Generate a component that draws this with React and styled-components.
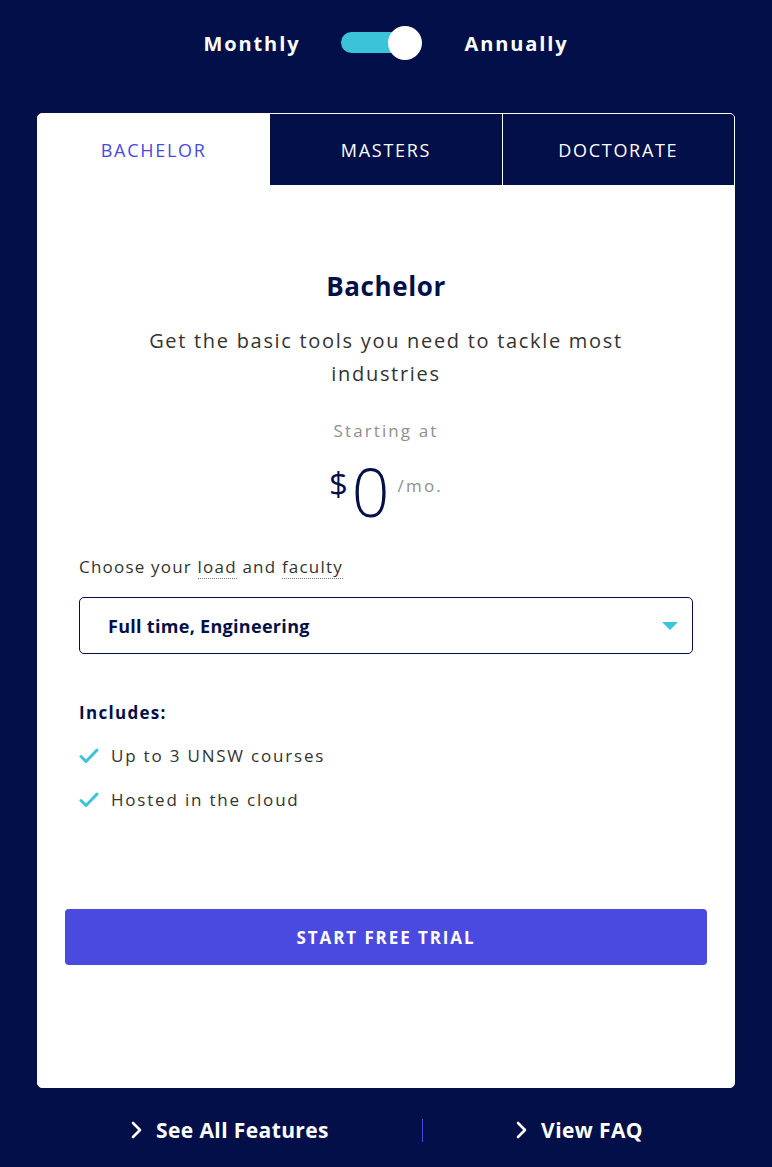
import React, { useState } from "react";
import styled, { createGlobalStyle } from "styled-components";

const navy = "#020f48";
const cyan = "#3bc3da";
const purple = "#4a4ae0";

const GlobalStyle = createGlobalStyle`
  body {
    margin: 0;
    background: ${navy};
    font-family: "Open Sans", "Noto Sans", sans-serif;
  }
`;

const Page = styled.div`
  width: 772px;
  padding-top: 24px;
  display: flex;
  flex-direction: column;
  align-items: center;
`;

const ToggleRow = styled.div`
  display: flex;
  align-items: center;
  gap: 40px;
  height: 38px;
`;

const ToggleLabel = styled.span`
  color: #fff;
  font-size: 20px;
  font-weight: 700;
  letter-spacing: 1.9px;
`;

const Switch = styled.button`
  position: relative;
  width: 84px;
  height: 38px;
  border: none;
  background: none;
  padding: 0;
  cursor: pointer;
  &::before {
    content: "";
    position: absolute;
    left: 1px;
    top: 8px;
    width: 64px;
    height: 21px;
    border-radius: 11px;
    background: ${cyan};
  }
  &::after {
    content: "";
    position: absolute;
    top: 2px;
    left: ${(p) => (p.$on ? "48px" : "0px")};
    width: 34px;
    height: 34px;
    border-radius: 50%;
    background: #fff;
  }
`;

const Card = styled.div`
  margin-top: 51px;
  width: 698px;
  background: #fff;
  border-radius: 5px;
  overflow: hidden;
  border: 1px solid #fff;
  box-sizing: border-box;
  display: flex;
  flex-direction: column;
`;

const Tabs = styled.div`
  display: grid;
  grid-template-columns: 1fr 1fr 1fr;
  gap: 1px;
  background: #fff;
`;

const Tab = styled.button`
  height: 71px;
  border: none;
  background: ${(p) => (p.$active ? "#fff" : navy)};
  color: ${(p) => (p.$active ? purple : "#fff")};
  font-family: inherit;
  font-size: 18px;
  font-weight: 500;
  letter-spacing: 1.7px;
  cursor: pointer;
`;

const Body = styled.div`
  padding: 83px 41px 0;
  display: flex;
  flex-direction: column;
`;

const Title = styled.h2`
  margin: 0;
  text-align: center;
  color: ${navy};
  font-size: 26px;
  font-weight: 700;
  line-height: 36px;
  letter-spacing: 0.6px;
`;

const Desc = styled.p`
  margin: 20px auto 0;
  max-width: 500px;
  text-align: center;
  color: #333;
  font-size: 20px;
  line-height: 33px;
  letter-spacing: 1.7px;
`;

const Starting = styled.div`
  margin-top: 29px;
  text-align: center;
  color: #8f8f8f;
  font-size: 17px;
  letter-spacing: 2.1px;
`;

const Price = styled.div`
  margin-top: 15px;
  display: flex;
  justify-content: center;
  align-items: flex-start;
  color: ${navy};
`;

const Currency = styled.span`
  font-size: 33px;
  line-height: 1;
  margin-top: 10px;
  margin-right: 4px;
`;

const Amount = styled.span`
  font-size: 66px;
  font-weight: 300;
  line-height: 68px;
`;

const Per = styled.span`
  margin-top: 17px;
  margin-left: 8px;
  color: #8f8f8f;
  font-size: 17px;
  letter-spacing: 2.2px;
`;

const FieldLabel = styled.div`
  margin-top: 30px;
  color: #333;
  font-size: 17px;
  letter-spacing: 1.2px;
`;

const Dotted = styled.span`
  border-bottom: 1px dotted #777;
`;

const Select = styled.div`
  margin-top: 19px;
  height: 57px;
  box-sizing: border-box;
  border: 1px solid ${navy};
  border-radius: 5px;
  padding: 0 14px 0 28px;
  display: flex;
  align-items: center;
  justify-content: space-between;
  color: ${navy};
  font-size: 18px;
  font-weight: 700;
  letter-spacing: 0.3px;
`;

const Caret = styled.span`
  width: 0;
  height: 0;
  border-left: 8px solid transparent;
  border-right: 8px solid transparent;
  border-top: 8px solid ${cyan};
`;

const Includes = styled.div`
  margin-top: 47px;
  color: ${navy};
  font-size: 17px;
  font-weight: 700;
  letter-spacing: 1.3px;
`;

const List = styled.ul`
  list-style: none;
  margin: 17px 0 0;
  padding: 0;
  display: flex;
  flex-direction: column;
  gap: 14px;
`;

const Item = styled.li`
  display: flex;
  align-items: center;
  gap: 12px;
  color: #333;
  font-size: 17px;
  letter-spacing: 1.8px;
  line-height: 30px;
`;

const StartButton = styled.button`
  margin: 94px 27px 122px;
  height: 56px;
  border: none;
  border-radius: 4px;
  background: ${purple};
  color: #fff;
  font-family: inherit;
  font-size: 17px;
  font-weight: 700;
  letter-spacing: 1.9px;
  cursor: pointer;
`;

const Footer = styled.div`
  width: 698px;
  height: 84px;
  display: grid;
  grid-template-columns: 385px 1px 1fr;
  align-items: center;
`;

const FooterLink = styled.a`
  display: flex;
  align-items: center;
  justify-content: center;
  gap: 14px;
  color: #fff;
  font-size: 21px;
  font-weight: 700;
  letter-spacing: 0.4px;
  text-decoration: none;
  cursor: pointer;
`;

const Divider = styled.span`
  height: 23px;
  background: ${purple};
`;

const Check = () => (
  <svg width="20" height="16" viewBox="0 0 20 16">
    <path d="M2 8.5l5 5L18 2" fill="none" stroke={cyan} strokeWidth="3" strokeLinecap="round" strokeLinejoin="round" />
  </svg>
);

const Chevron = () => (
  <svg width="12" height="18" viewBox="0 0 12 18">
    <path d="M3 2l7 7-7 7" fill="none" stroke="#fff" strokeWidth="2.6" strokeLinecap="round" strokeLinejoin="round" />
  </svg>
);

export default function App() {
  const [annual, setAnnual] = useState(true);
  const [tab, setTab] = useState("BACHELOR");
  return (
    <Page>
      <GlobalStyle />
      <ToggleRow>
        <ToggleLabel>Monthly</ToggleLabel>
        <Switch $on={annual} onClick={() => setAnnual(!annual)} aria-label="Billing period" />
        <ToggleLabel>Annually</ToggleLabel>
      </ToggleRow>
      <Card>
        <Tabs>
          {["BACHELOR", "MASTERS", "DOCTORATE"].map((t) => (
            <Tab key={t} $active={tab === t} onClick={() => setTab(t)}>
              {t}
            </Tab>
          ))}
        </Tabs>
        <Body>
          <Title>Bachelor</Title>
          <Desc>Get the basic tools you need to tackle most industries</Desc>
          <Starting>Starting at</Starting>
          <Price>
            <Currency>$</Currency>
            <Amount>0</Amount>
            <Per>/mo.</Per>
          </Price>
          <FieldLabel>
            Choose your <Dotted>load</Dotted> and <Dotted>faculty</Dotted>
          </FieldLabel>
          <Select>
            Full time, Engineering
            <Caret />
          </Select>
          <Includes>Includes:</Includes>
          <List>
            <Item>
              <Check />
              Up to 3 UNSW courses
            </Item>
            <Item>
              <Check />
              Hosted in the cloud
            </Item>
          </List>
        </Body>
        <StartButton>START FREE TRIAL</StartButton>
      </Card>
      <Footer>
        <FooterLink>
          <Chevron />
          See All Features
        </FooterLink>
        <Divider />
        <FooterLink>
          <Chevron />
          View FAQ
        </FooterLink>
      </Footer>
    </Page>
  );
}
